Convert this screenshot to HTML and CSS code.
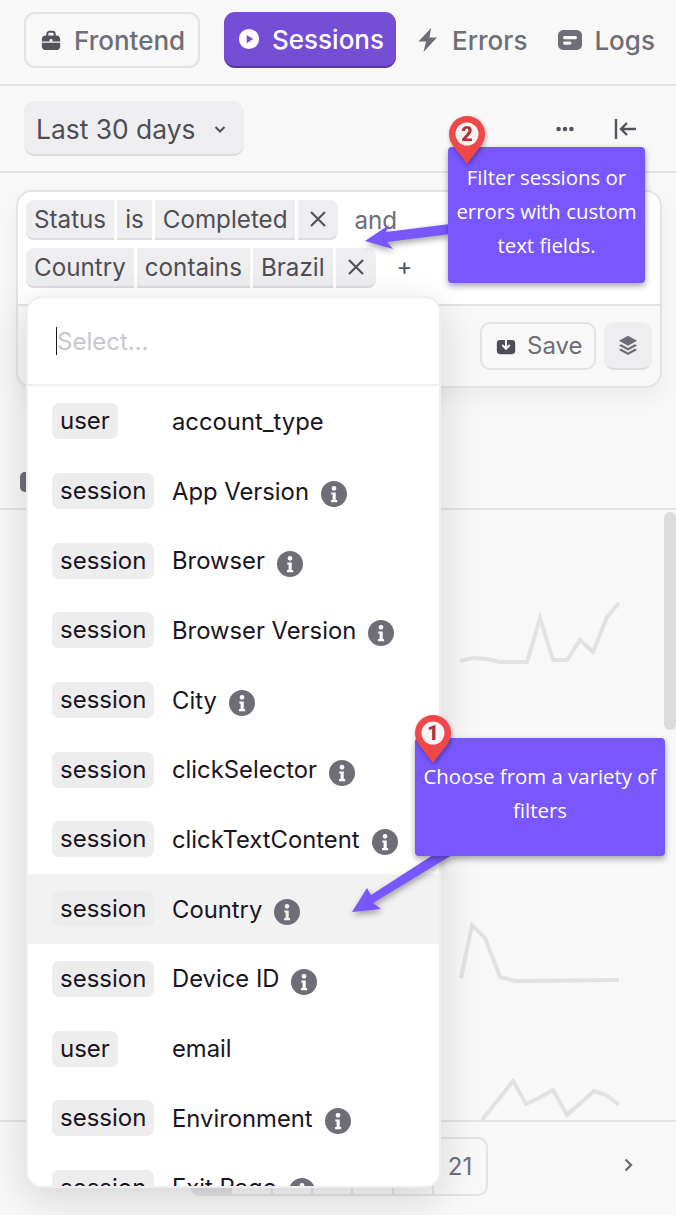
FILE: index.html
```html
<!DOCTYPE html>
<html lang="en">
<head>
    <meta charset="UTF-8">
    <meta name="viewport" content="width=device-width, initial-scale=1.0">
    <title>Sessions</title>
    <link rel="stylesheet" href="styles.css">
</head>
<body>
<svg class="defs" width="0" height="0">
    <symbol id="info" viewBox="0 0 24 24"><path fill-rule="evenodd" d="M12 0a12 12 0 1 1 0 24 12 12 0 0 1 0-24zM12 4.500a2.200 2.200 0 1 0 0 4.400 2.200 2.200 0 0 0 0-4.400zM9.500 10.500v2h1.200v5H9.300v2h5.600v-2h-1.300v-7z"/></symbol>
    <symbol id="close" viewBox="0 0 18 18"><path d="M2 2l14 14M16 2 2 16"/></symbol>
    <symbol id="pin-shape" viewBox="0 0 36 48"><path d="M18 0C8 0 0 8 0 18c0 5 2 9 5 13l13 17 13-17c3-4 5-8 5-13C36 8 28 0 18 0z"/><circle cx="18" cy="18" r="11.500" fill="#f7f3f3"/></symbol>
</svg>
<div class="page">
    <nav class="topnav">
        <a class="nav-btn nav-project">
            <svg class="nav-icon" viewBox="0 0 24 24"><path class="handle" d="M8 8V5.500C8 4.100 9 3 10.500 3h3C15 3 16 4.100 16 5.500V8"/><path d="M6 7h12c2.200 0 4 1.800 4 4v2.500H2V11c0-2.200 1.800-4 4-4zM2 15h20v4c0 2.200-1.800 4-4 4H6c-2.200 0-4-1.800-4-4z"/><circle class="hole" cx="12" cy="12.500" r="1.600"/></svg>
            Frontend
        </a>
        <a class="nav-btn nav-active">
            <svg class="nav-icon" viewBox="0 0 24 24"><path fill-rule="evenodd" d="M12 1a11 11 0 1 1 0 22 11 11 0 0 1 0-22zM9.500 7.500v9l7-4.500z"/></svg>
            Sessions
        </a>
        <a class="nav-btn nav-plain nav-errors">
            <svg class="nav-icon nav-icon-wide" viewBox="0 0 24 24"><path d="M15 0 2.500 13.500H10L7.500 24 21 9.500h-7.500z"/></svg>
            Errors
        </a>
        <a class="nav-btn nav-plain nav-logs">
            <svg class="nav-icon nav-icon-wide" viewBox="0 0 24 24"><path d="M6 2h12c3 0 6 2 6 5v10c0 3-3 5-6 5H6c-3 0-6-2-6-5V7c0-3 3-5 6-5z"/><rect class="hole" x="5" y="8" width="14" height="3.200" rx="1.600"/><rect class="hole" x="5" y="13.500" width="8.500" height="3.200" rx="1.600"/></svg>
            Logs
        </a>
    </nav>

    <div class="toolbar">
        <button class="range-btn">
            Last 30 days
            <svg class="chev" viewBox="0 0 16 16"><path d="M3.500 6 8 10.500 12.500 6"/></svg>
        </button>
        <div class="toolbar-icons">
            <svg class="tool-icon" viewBox="0 0 24 24"><circle cx="5" cy="12" r="2.500"/><circle cx="12" cy="12" r="2.500"/><circle cx="19" cy="12" r="2.500"/></svg>
            <svg class="tool-icon collapse" viewBox="0 0 24 24"><path d="M2 2v20M22 12H7M13 6l-6 6 6 6"/></svg>
        </div>
    </div>

    <section class="filter-card">
        <div class="filter-top">
            <div class="chip-row">
                <span class="chip">Status</span><span class="chip">is</span><span class="chip">Completed</span><span class="chip chip-x"><svg class="x-icon"><use href="#close"/></svg></span>
                <span class="and">and</span>
            </div>
            <div class="chip-row">
                <span class="chip">Country</span><span class="chip">contains</span><span class="chip">Brazil</span><span class="chip chip-x"><svg class="x-icon"><use href="#close"/></svg></span>
                <span class="plus">+</span>
            </div>
        </div>
        <div class="filter-bottom">
            <button class="save-btn">
                <svg class="save-icon" viewBox="0 0 24 24"><rect x="1" y="6" width="22" height="17" rx="4"/><path class="save-arrow" d="M12 3v13M7.500 12l4.500 4.500 4.500-4.500"/></svg>
                Save
            </button>
            <button class="layers-btn">
                <svg class="layers-icon" viewBox="0 0 24 24"><path d="M12 1 23 7 12 13 1 7z"/><path d="M4 11 12 15.500 20 11 23 12.500 12 18.500 1 12.500z"/><path d="M4 16.500 12 21 20 16.500 23 18 12 24 1 18z"/></svg>
            </button>
        </div>
    </section>

    <div class="meta-row"><span class="meta-mark"></span></div>

    <section class="results">
        <svg class="sparks" viewBox="0 510 676 610">
            <polyline points="460,661 473,658 487,659 500,662 527,662 540,618 553,660 567,660 580,640 593,652 607,617 619,603"/>
            <polyline points="461,978 472,925 485,938 500,977 515,981 619,980"/>
            <polyline points="482,1120 513,1081 526,1104 539,1098 553,1090 567,1115 594,1091 606,1095 619,1105"/>
        </svg>
        <div class="scrollbar"></div>
    </section>

    <footer class="pager-bar">
        <div class="pager">
            <span class="page-cell page-current"></span>
            <span class="page-cell"></span>
            <span class="page-cell"></span>
            <span class="page-cell"></span>
            <span class="page-cell"></span>
            <span class="page-cell"></span>
            <span class="page-cell page-last">21</span>
        </div>
        <svg class="pager-next" viewBox="0 0 16 16"><path d="M5.500 2.500 11 8l-5.500 5.500"/></svg>
    </footer>

    <!-- dropdown over the filter card -->
    <div class="dropdown">
        <div class="dd-input"><span class="caret"></span><span class="placeholder">Select...</span></div>
        <ul class="dd-list">
            <li class="dd-row"><span class="tag-col"><span class="tag">user</span></span><span class="dd-name">account_type</span></li>
            <li class="dd-row"><span class="tag-col"><span class="tag">session</span></span><span class="dd-name">App Version</span><svg class="info"><use href="#info"/></svg></li>
            <li class="dd-row"><span class="tag-col"><span class="tag">session</span></span><span class="dd-name">Browser</span><svg class="info"><use href="#info"/></svg></li>
            <li class="dd-row"><span class="tag-col"><span class="tag">session</span></span><span class="dd-name">Browser Version</span><svg class="info"><use href="#info"/></svg></li>
            <li class="dd-row"><span class="tag-col"><span class="tag">session</span></span><span class="dd-name">City</span><svg class="info"><use href="#info"/></svg></li>
            <li class="dd-row"><span class="tag-col"><span class="tag">session</span></span><span class="dd-name">clickSelector</span><svg class="info"><use href="#info"/></svg></li>
            <li class="dd-row"><span class="tag-col"><span class="tag">session</span></span><span class="dd-name">clickTextContent</span><svg class="info"><use href="#info"/></svg></li>
            <li class="dd-row dd-hover"><span class="tag-col"><span class="tag">session</span></span><span class="dd-name">Country</span><svg class="info"><use href="#info"/></svg></li>
            <li class="dd-row"><span class="tag-col"><span class="tag">session</span></span><span class="dd-name">Device ID</span><svg class="info"><use href="#info"/></svg></li>
            <li class="dd-row"><span class="tag-col"><span class="tag">user</span></span><span class="dd-name">email</span></li>
            <li class="dd-row"><span class="tag-col"><span class="tag">session</span></span><span class="dd-name">Environment</span><svg class="info"><use href="#info"/></svg></li>
            <li class="dd-row"><span class="tag-col"><span class="tag">session</span></span><span class="dd-name">Exit Page</span><svg class="info"><use href="#info"/></svg></li>
        </ul>
    </div>

    <!-- tour annotations -->
    <svg class="arrows" viewBox="0 0 676 1215">
        <path d="M450 224 386 232 389 225 365 241 393 249 387 242 450 234z"/>
        <path d="M433 855 371 895 367 888 352 912 381 909 373 903 452 855z"/>
    </svg>

    <div class="callout callout-two">Filter sessions or errors with custom text fields.</div>
    <div class="callout callout-one">Choose from a variety of filters</div>

    <div class="pin pin-two">
        <svg><use href="#pin-shape"/></svg>
        <span class="pin-num">2</span>
    </div>
    <div class="pin pin-one">
        <svg><use href="#pin-shape"/></svg>
        <span class="pin-num">1</span>
    </div>
</div>
</body>
</html>
```

FILE: styles.css
```css
* { box-sizing: border-box; }
html, body { margin: 0; padding: 0; }
body { font-family: Inter, "Liberation Sans", sans-serif; background-color: #f8f8f8; color: #6f6e77; }
button { font-family: inherit; }
ul { list-style: none; margin: 0; padding: 0; }
.defs { position: absolute; }

.page { position: relative; width: 676px; height: 1215px; overflow: hidden; background: #f8f8f8; }

/* top nav */
.topnav { display: flex; align-items: flex-start; height: 86px; padding: 12px 0 0 24px; border-bottom: 2px solid #e4e2e4; }
.nav-btn { display: flex; align-items: center; gap: 12px; height: 56px; font-size: 26px; font-weight: 500; color: #6f6e77; white-space: nowrap; }
.nav-icon { width: 22px; height: 22px; fill: currentColor; flex: none; }
.nav-icon-wide { width: 24px; height: 24px; }
.handle { fill: none; stroke: currentColor; stroke-width: 2.200; }
.hole { fill: #f8f8f8; }
.nav-project { width: 176px; padding-left: 14px; border: 2px solid #e4e2e4; border-radius: 11px; }
.nav-project .nav-icon { color: #55535c; }
.nav-active { width: 172px; margin-left: 24px; padding-left: 14px; background: #744ed4; color: #fff; border-radius: 11px; border-bottom: 2px solid #53389e; }
.nav-errors { margin-left: 20px; }
.nav-logs { margin-left: 31px; }

/* date range row */
.toolbar { display: flex; justify-content: space-between; align-items: flex-start; height: 87px; padding: 15px 38px 0 24px; border-bottom: 2px solid #e4e2e4; }
.range-btn { display: flex; align-items: center; gap: 17px; height: 55px; width: 220px; padding: 2px 0 0 12px; border: 0; border-bottom: 2px solid #dcdbdd; border-radius: 11px; background: #eeedef; color: #4f4d56; font-size: 26.400px; }
.chev { width: 16px; height: 16px; fill: none; stroke: currentColor; stroke-width: 2; }
.toolbar-icons { display: flex; align-items: center; gap: 38px; height: 55px; }
.tool-icon { width: 22px; height: 22px; fill: #55535c; }
.collapse { width: 24px; height: 24px; fill: none; stroke: #55535c; stroke-width: 2.400; }

/* filter card */
.filter-card { margin: 17px 14px 0 16px; height: 198px; border: 2px solid #e4e2e4; border-radius: 16px; overflow: hidden; box-shadow: 0 10px 24px rgba(0, 0, 0, 0.05); }
.filter-top { height: 114px; padding: 8px 8px 0; background: #fff; border-bottom: 2px solid #e4e2e4; }
.chip-row { display: flex; align-items: center; gap: 3px; height: 40px; margin-bottom: 8px; }
.chip { display: flex; align-items: center; height: 40px; padding: 0 8px; background: #eeedef; border-bottom: 2px solid #dcdbdd; font-size: 24.200px; color: #4f4d56; }
.chip:first-child { border-radius: 8px 0 0 8px; }
.chip-x { width: 40px; justify-content: center; padding: 0; border-radius: 0 8px 8px 0; }
.x-icon { width: 18px; height: 18px; fill: none; stroke: #55535c; stroke-width: 2.200; }
.and { margin-left: 13px; font-size: 24.200px; color: #6f6e77; }
.plus { margin: 0 0 4px 18px; font-size: 24px; color: #55535c; }
.filter-bottom { display: flex; justify-content: flex-end; gap: 8px; padding: 16px 8px 0 0; }
.save-btn { display: flex; align-items: center; gap: 11px; width: 116px; height: 48px; padding: 0 0 2px 14px; border: 2px solid #e4e2e4; border-radius: 10px; background: #f8f8f8; color: #6f6e77; font-size: 24px; }
.save-icon { width: 20px; height: 20px; fill: #4f4d56; }
.save-arrow { fill: none; stroke: #f8f8f8; stroke-width: 2.400; }
.layers-btn { display: flex; align-items: center; justify-content: center; width: 48px; height: 48px; padding: 0; border: 0; border-bottom: 2px solid #dcdbdd; border-radius: 10px; background: #eeedef; }
.layers-icon { width: 20px; height: 20px; fill: #6f6e77; }

/* session list behind the dropdown */
.meta-row { display: flex; align-items: flex-end; height: 122px; padding: 0 0 16px 20px; border-bottom: 2px solid #e4e2e4; }
.meta-mark { width: 10px; height: 20px; border-radius: 5px 0 0 5px; background: #6f6e77; }
.results { position: relative; height: 610px; }
.sparks { display: block; width: 676px; height: 610px; }
.sparks polyline { fill: none; stroke: #e2e2e2; stroke-width: 4; }
.scrollbar { position: absolute; top: 2px; right: 0; width: 12px; height: 218px; border-radius: 6px; background: #dcdcde; }

.pager-bar { display: flex; align-items: flex-start; height: 95px; padding: 15px 0 0 190px; border-top: 2px solid #e4e2e4; }
.pager { display: flex; width: 298px; height: 59px; border: 2px solid #e4e2e4; border-radius: 10px; overflow: hidden; }
.page-cell { flex: 1; display: flex; align-items: center; justify-content: center; border-right: 2px solid #e4e2e4; font-size: 24px; color: #6f6e77; }
.page-current { background: #e4e2e4; }
.page-last { flex: none; width: 52px; border-right: 0; }
.pager-next { width: 16px; height: 16px; margin: 20px 0 0 132px; fill: none; stroke: #6f6e77; stroke-width: 2.400; }

/* dropdown */
.dropdown { position: absolute; left: 26px; top: 296px; width: 415px; height: 892px; overflow: hidden; background: #fff; border: 2px solid #eeedef; border-radius: 16px; box-shadow: 0 10px 40px rgba(0, 0, 0, 0.15); }
.dd-input { display: flex; align-items: center; height: 88px; padding-left: 28px; border-bottom: 2px solid #eeedef; }
.caret { width: 1px; height: 28px; background: #1a1523; }
.placeholder { font-size: 24px; color: #c8c7cb; }
.dd-list { padding-top: 0.500px; }
.dd-row { display: flex; align-items: center; height: 69.700px; padding-left: 24px; color: #1a1523; font-size: 23.800px; }
.dd-hover { background: #f2f2f3; }
.tag-col { flex: none; width: 120px; }
.tag { display: inline-block; height: 36px; padding: 0 8px; line-height: 36px; border-radius: 7px; background: #ededee; font-size: 24px; }
.dd-name { white-space: nowrap; }
.info { flex: none; width: 26px; height: 26px; margin: 6px 0 0 12px; fill: #6f6e77; }

/* annotations */
.arrows { position: absolute; left: 0; top: 0; width: 676px; height: 1215px; fill: #7857ff; filter: drop-shadow(1px 3px 3px rgba(0, 0, 0, 0.35)); pointer-events: none; }
.callout { position: absolute; display: flex; align-items: flex-start; justify-content: center; text-align: center; background: #7857ff; color: #fff; font-family: "Open Sans", Lato, sans-serif; font-size: 20.400px; line-height: 34px; border-radius: 4px; box-shadow: 0 3px 6px rgba(0, 0, 0, 0.35); }
.callout-two { left: 448px; top: 147px; width: 197px; height: 136px; padding: 13px 4px 0; }
.callout-one { left: 415px; top: 738px; width: 250px; height: 118px; padding: 21px 2px 0; }
.pin { position: absolute; width: 36px; height: 48px; filter: drop-shadow(1px 2px 2px rgba(0, 0, 0, 0.35)); }
.pin svg { display: block; width: 36px; height: 48px; fill: #f04848; }
.pin-num { position: absolute; left: 0; top: 5px; width: 36px; text-align: center; font: 900 20px/26px Roboto, sans-serif; color: #b5303a; }
.pin-two { left: 449px; top: 116px; }
.pin-one { left: 415px; top: 715px; }
```
